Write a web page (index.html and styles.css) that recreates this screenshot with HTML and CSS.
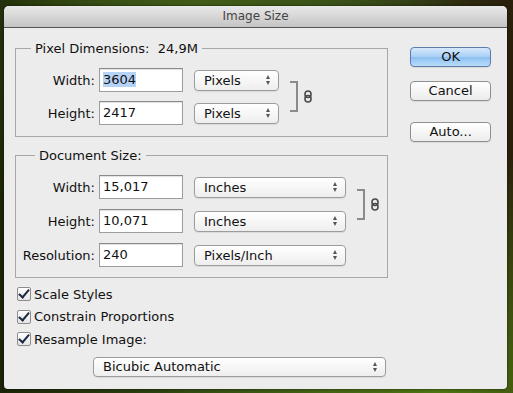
FILE: index.html
```html
<!DOCTYPE html>
<html lang="en">
  <head>
    <meta charset="UTF-8" />
    <title>Image Size</title>
    <link rel="stylesheet" href="styles.css">
  </head>
  <body>
    <div class="window">
      <div class="titlebar">Image Size</div>

      <div class="dialog">
        <div class="left">
          <fieldset class="group">
            <legend>Pixel Dimensions:&nbsp; 24,9M</legend>
            <div class="rows rows-px">
              <div class="label">Width:</div>
              <div class="field"><span class="sel">3604</span></div>
              <div class="popup"><span>Pixels</span><span class="arrows"></span></div>
              <div class="bracket"></div>
              <svg class="link" width="8" height="13" viewBox="0 0 8 13">
                <rect x="1" y="1" width="6" height="6.5" rx="3" fill="none" stroke="#4a4a4a" stroke-width="1.6"/>
                <rect x="1" y="5.5" width="6" height="6.5" rx="3" fill="none" stroke="#4a4a4a" stroke-width="1.6"/>
              </svg>

              <div class="label">Height:</div>
              <div class="field">2417</div>
              <div class="popup"><span>Pixels</span><span class="arrows"></span></div>
            </div>
          </fieldset>

          <fieldset class="group doc">
            <legend>Document Size:</legend>
            <div class="rows rows-doc">
              <div class="label">Width:</div>
              <div class="field">15,017</div>
              <div class="popup"><span>Inches</span><span class="arrows"></span></div>
              <div class="bracket"></div>
              <svg class="link" width="8" height="13" viewBox="0 0 8 13">
                <rect x="1" y="1" width="6" height="6.5" rx="3" fill="none" stroke="#4a4a4a" stroke-width="1.6"/>
                <rect x="1" y="5.5" width="6" height="6.5" rx="3" fill="none" stroke="#4a4a4a" stroke-width="1.6"/>
              </svg>

              <div class="label">Height:</div>
              <div class="field">10,071</div>
              <div class="popup"><span>Inches</span><span class="arrows"></span></div>

              <div class="label">Resolution:</div>
              <div class="field">240</div>
              <div class="popup"><span>Pixels/Inch</span><span class="arrows"></span></div>
            </div>
          </fieldset>

          <div class="checks">
            <div class="check"><span class="box"></span>Scale Styles</div>
            <div class="check"><span class="box"></span>Constrain Proportions</div>
            <div class="check"><span class="box"></span>Resample Image:</div>
          </div>

          <div class="popup wide"><span>Bicubic Automatic</span><span class="arrows"></span></div>
        </div>

        <div class="right">
          <div class="btn default">OK</div>
          <div class="btn cancel">Cancel</div>
          <div class="btn auto">Auto...</div>
        </div>
      </div>
    </div>
  </body>
</html>
```

FILE: styles.css
```css
body {
  margin: 0;
  height: 393px;
  overflow: hidden;
  font-family: "DejaVu Sans", sans-serif;
  font-size: 13px;
  color: #111;
  /* размытые обои рабочего стола */
  background:
    radial-gradient(ellipse at 85% 100%, #4e7512 0%, rgba(78, 117, 18, 0) 45%),
    radial-gradient(ellipse at 40% 0%, #415c18 0%, rgba(65, 92, 24, 0) 60%),
    linear-gradient(to right, #1b2407 0%, #2f4512 35%, #34491a 65%, #2a1f0b 100%);
}

.window {
  margin: 6px 0 0 4px;
  width: 503px;
  height: 383px;
  background: #ececec;
  border-radius: 5px 5px 4px 4px;
  overflow: hidden;
  box-shadow: 0 0 3px rgba(0, 0, 0, 0.6);
}

.titlebar {
  height: 21px;
  line-height: 21px;
  border-bottom: 1px solid #555;
  background: linear-gradient(#e9e9e9, #c4c4c4);
  text-align: center;
  font-size: 12px;
  color: #444;
}

.dialog {
  display: flex;
  gap: 22px;
  padding: 0 16px 0 11px;
}

.left {
  width: 374px;
  padding-top: 13px;
}

.right {
  width: 81px;
  padding-top: 19px;
  display: flex;
  flex-direction: column;
}

.group {
  margin: 0;
  padding: 12px 0 11px 0;
  border: 1px solid #a8a8a8;
  min-inline-size: 0;
}

.group.doc {
  margin-top: 11px;
  padding-top: 12px;
  padding-bottom: 10px;
}

legend {
  margin-left: 15px;
  padding: 0 4px;
  line-height: 15px;
}

.group.doc legend {
  margin-left: 19px;
}

.rows {
  display: grid;
  grid-auto-rows: 24px;
  align-items: center;
}

.rows-px {
  grid-template-columns: 83px 95px 96px 14px 8px;
  row-gap: 9px;
}

.rows-doc {
  grid-template-columns: 83px 95px 163px 14px 8px;
  row-gap: 10px;
}

.label {
  text-align: right;
  padding-right: 4px;
}

.field {
  width: 84px;
  height: 24px;
  box-sizing: border-box;
  border: 1px solid #9d9d9d;
  border-top-color: #8a8a8a;
  background: #fff;
  box-shadow: inset 0 1px 1px rgba(0, 0, 0, 0.12);
  padding-left: 3px;
  line-height: 22px;
}

.sel {
  background: #b5d3f7;
}

.popup {
  height: 21px;
  box-sizing: border-box;
  border: 1px solid #9c9c9c;
  border-radius: 4px;
  background: linear-gradient(#ffffff, #eeeeee);
  box-shadow: 0 1px 1px rgba(0, 0, 0, 0.08);
  display: flex;
  align-items: center;
  justify-content: space-between;
  padding: 0 7px 0 9px;
}

.rows-px .popup {
  width: 85px;
}

.rows-doc .popup {
  width: 152px;
}

/* стрелки вверх/вниз у выпадающего списка */
.arrows {
  width: 5px;
  height: 10px;
  position: relative;
}

.arrows::before,
.arrows::after {
  content: "";
  position: absolute;
  left: 0;
  border-left: 2.5px solid transparent;
  border-right: 2.5px solid transparent;
}

.arrows::before {
  top: 0;
  border-bottom: 4px solid #555;
}

.arrows::after {
  bottom: 0;
  border-top: 4px solid #555;
}

.bracket {
  grid-row: 1 / 3;
  grid-column: 4;
  width: 6px;
  height: 27px;
  border: 2px solid #8a8a8a;
  border-left: none;
  align-self: center;
}

.link {
  grid-row: 1 / 3;
  grid-column: 5;
  align-self: center;
}

.checks {
  margin-top: 5px;
  padding-left: 2px;
}

.check {
  display: flex;
  align-items: center;
  height: 22.5px;
}

.box {
  width: 14px;
  height: 14px;
  box-sizing: border-box;
  margin-right: 3px;
  border: 1px solid #8d8d8d;
  border-radius: 2px;
  background: linear-gradient(#ffffff, #e4e4e4);
  position: relative;
}

.box::after {
  content: "";
  position: absolute;
  left: 3px;
  top: -1px;
  width: 4px;
  height: 9px;
  border: solid #1d2a44;
  border-width: 0 2px 2px 0;
  transform: rotate(40deg);
}

.popup.wide {
  margin: 6px 0 0 78px;
  width: 293px;
  height: 20px;
}

.btn {
  height: 20px;
  box-sizing: border-box;
  border: 1px solid #8f8f8f;
  border-radius: 4px;
  background: linear-gradient(#ffffff, #ececec);
  box-shadow: 0 1px 1px rgba(0, 0, 0, 0.08);
  text-align: center;
  line-height: 18px;
}

.btn.default {
  border-color: #5a7eab;
  background: linear-gradient(#d6e9fc 0%, #a8cff5 50%, #8cc0f2 51%, #b9dcfa 100%);
}

.btn.cancel {
  margin-top: 14px;
}

.btn.auto {
  margin-top: 21px;
}
```
